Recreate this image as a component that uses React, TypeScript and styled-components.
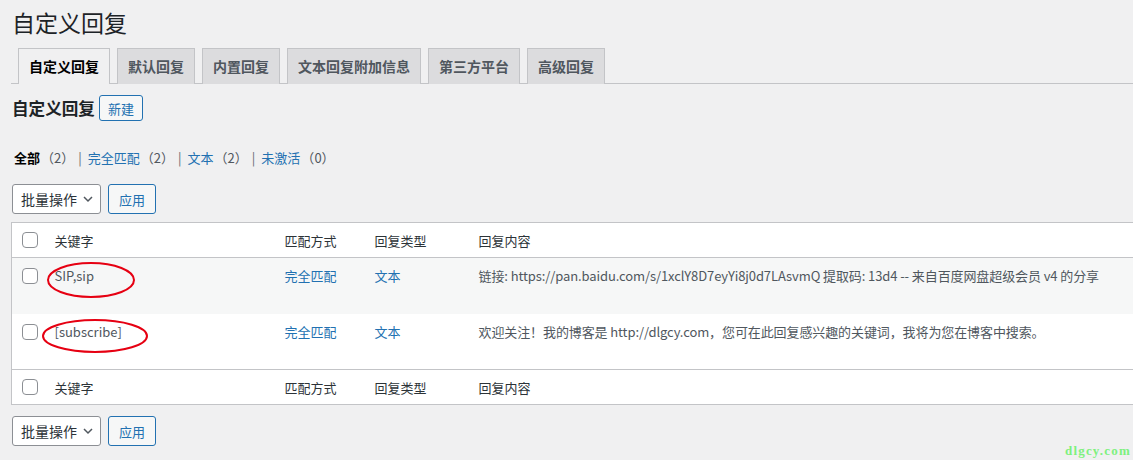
import { createGlobalStyle } from "styled-components";
import styled from "styled-components";

const GlobalStyle = createGlobalStyle`
	html, body {
		margin: 0;
		padding: 0;
		height: 460px;
		overflow: hidden;
		background: #f0f0f1;
	}
	body {
		font-family: "Noto Sans CJK SC", "Noto Sans", sans-serif;
		font-size: 13px;
		color: #3c434a;
	}
`;

const Wrap = styled.div`
	position: relative;
	height: 460px;
	padding: 7px 0 0 11px;
	box-sizing: border-box;
	overflow: hidden;
`;

const PageTitle = styled.h1`
	margin: 0 0 0 1px;
	font-size: 23px;
	font-weight: 400;
	line-height: 30px;
	color: #1d2327;
`;

const TabBar = styled.nav`
	display: flex;
	gap: 7px;
	margin-top: 11px;
	padding-left: 7px;
	border-bottom: 1px solid #c3c4c7;
	height: 35px;
`;

const Tab = styled.a<{ $active?: boolean }>`
	display: block;
	height: 36px;
	box-sizing: border-box;
	padding: 5px 10px;
	font-size: 14px;
	line-height: 24px;
	font-weight: 600;
	border: 1px solid #c3c4c7;
	border-bottom: none;
	background: ${({ $active }) => ($active ? "#f0f0f1" : "#dcdcde")};
	color: ${({ $active }) => ($active ? "#000" : "#50575e")};
	text-decoration: none;
	white-space: nowrap;
`;

const HeadingRow = styled.div`
	display: flex;
	align-items: center;
	gap: 4px;
	margin-top: 11px;
	height: 26px;
`;

const SectionTitle = styled.h2`
	margin: 0 0 0 1px;
	font-size: 16.6px;
	font-weight: 700;
	line-height: 26px;
	color: #1d2327;
`;

const OutlineButton = styled.button<{ $height?: number }>`
	height: ${({ $height = 26 }) => $height}px;
	box-sizing: border-box;
	padding: 0 ${({ $height = 26 }) => ($height > 26 ? 10 : 8)}px;
	border: 1px solid #2271b1;
	border-radius: 3px;
	background: #f6f7f7;
	color: #2271b1;
	font-family: inherit;
	font-size: 13px;
	line-height: 1;
	cursor: pointer;
`;

const Filters = styled.ul`
	display: flex;
	list-style: none;
	margin: 27px 0 0 3px;
	padding: 0;
	line-height: 20px;
	color: #646970;
	white-space: pre;
`;

const FilterLink = styled.a<{ $current?: boolean }>`
	color: ${({ $current }) => ($current ? "#000" : "#2271b1")};
	font-weight: ${({ $current }) => ($current ? 600 : 400)};
	text-decoration: none;
`;

const Count = styled.span`
	margin-left: 1px;
	color: #50575e;
	font-weight: 400;
`;

const Separator = styled.span`
	margin: 0 6px 0 4px;
	color: #646970;
`;

const Actions = styled.div<{ $top: number }>`
	display: flex;
	gap: 7px;
	margin-top: ${({ $top }) => $top}px;
	padding-left: 1px;
`;

const SelectBox = styled.div`
	display: flex;
	align-items: center;
	justify-content: space-between;
	height: 30px;
	width: 89px;
	box-sizing: border-box;
	padding: 0 6px 0 8px;
	background: #fff;
	border: 1px solid #8c8f94;
	border-radius: 3px;
	font-size: 14px;
	color: #2c3338;
`;

const Table = styled.table`
	margin-top: 8px;
	width: 1140px;
	table-layout: fixed;
	border-collapse: collapse;
	background: #fff;
	border: 1px solid #c3c4c7;
`;

const HeadRow = styled.tr<{ $top?: boolean }>`
	height: 35px;
	${({ $top }) =>
		$top ? "border-bottom: 1px solid #c3c4c7;" : "border-top: 1px solid #c3c4c7;"}
`;

const BodyRow = styled.tr<{ $striped?: boolean }>`
	height: 56px;
	background: ${({ $striped }) => ($striped ? "#f6f7f7" : "#fff")};
`;

const HeadCell = styled.th`
	padding: 0 10px;
	text-align: left;
	font-weight: 400;
	font-size: 13px;
	color: #2c3338;
	vertical-align: middle;
`;

const Cell = styled.td`
	position: relative;
	padding: 8px 10px 0;
	vertical-align: top;
	line-height: 20px;
	color: #50575e;
	white-space: nowrap;
`;

const ContentCell = styled(Cell)`
	letter-spacing: -0.1px;
`;

const CheckCell = styled.td<{ $head?: boolean }>`
	padding: ${({ $head }) => ($head ? "0 0 0 10px" : "10px 0 0 10px")};
	vertical-align: ${({ $head }) => ($head ? "middle" : "top")};
`;

const CheckBox = styled.span`
	display: block;
	width: 16px;
	height: 16px;
	box-sizing: border-box;
	border: 1px solid #8c8f94;
	border-radius: 4px;
	background: #fff;
`;

const Link = styled.a`
	color: #2271b1;
	text-decoration: none;
`;

const Ring = styled.svg<{ $left: number; $top: number }>`
	position: absolute;
	left: ${({ $left }) => $left}px;
	top: ${({ $top }) => $top}px;
	overflow: visible;
`;

const Watermark = styled.div`
	position: absolute;
	right: 2px;
	bottom: 1px;
	font-family: "Liberation Serif", serif;
	font-weight: 700;
	font-size: 13px;
	letter-spacing: 1.2px;
	color: #7ef07e;
`;

const Chevron = () => (
	<svg width="12" height="12" viewBox="0 0 12 12">
		<path d="M2 4l4 4 4-4" fill="none" stroke="#50575e" strokeWidth="1.5" />
	</svg>
);

const Ellipse = ({ left, top, w, h }: { left: number; top: number; w: number; h: number }) => (
	<Ring $left={left} $top={top} width={w} height={h} viewBox={`0 0 ${w} ${h}`}>
		<ellipse cx={w / 2} cy={h / 2} rx={w / 2 - 1} ry={h / 2 - 1} fill="none" stroke="#e60012" strokeWidth="2" />
	</Ring>
);

const BulkActions = ({ top }: { top: number }) => (
	<Actions $top={top}>
		<SelectBox>
			批量操作
			<Chevron />
		</SelectBox>
		<OutlineButton $height={30}>应用</OutlineButton>
	</Actions>
);

const tabs = ["自定义回复", "默认回复", "内置回复", "文本回复附加信息", "第三方平台", "高级回复"];

const filters = [
	{ label: "全部", count: 2, current: true },
	{ label: "完全匹配", count: 2 },
	{ label: "文本", count: 2 },
	{ label: "未激活", count: 0 },
];

const rows = [
	{
		keyword: "SIP,sip",
		content:
			"链接: https://pan.baidu.com/s/1xclY8D7eyYi8j0d7LAsvmQ 提取码: 13d4 -- 来自百度网盘超级会员 v4 的分享",
		ring: { left: 2, top: 4, w: 88, h: 36 },
	},
	{
		keyword: "[subscribe]",
		content: "欢迎关注！我的博客是 http://dlgcy.com，您可在此回复感兴趣的关键词，我将为您在博客中搜索。",
		ring: { left: -3, top: 5, w: 106, h: 34 },
	},
];

const HeaderCells = () => (
	<>
		<CheckCell $head>
			<CheckBox />
		</CheckCell>
		<HeadCell>关键字</HeadCell>
		<HeadCell>匹配方式</HeadCell>
		<HeadCell>回复类型</HeadCell>
		<HeadCell>回复内容</HeadCell>
	</>
);

export default function App() {
	return (
		<Wrap>
			<GlobalStyle />
			<PageTitle>自定义回复</PageTitle>
			<TabBar>
				{tabs.map((t, i) => (
					<Tab key={t} $active={i === 0}>
						{t}
					</Tab>
				))}
			</TabBar>
			<HeadingRow>
				<SectionTitle>自定义回复</SectionTitle>
				<OutlineButton>新建</OutlineButton>
			</HeadingRow>
			<Filters>
				{filters.map((f, i) => (
					<li key={f.label}>
						<FilterLink $current={f.current}>
							{f.label}
							<Count>（{f.count}）</Count>
						</FilterLink>
						{i < filters.length - 1 && <Separator>|</Separator>}
					</li>
				))}
			</Filters>
			<BulkActions top={16} />
			<Table>
				<colgroup>
					<col style={{ width: 33 }} />
					<col style={{ width: 230 }} />
					<col style={{ width: 90 }} />
					<col style={{ width: 104 }} />
					<col />
				</colgroup>
				<thead>
					<HeadRow $top>
						<HeaderCells />
					</HeadRow>
				</thead>
				<tbody>
					{rows.map((r, i) => (
						<BodyRow key={r.keyword} $striped={i === 0}>
							<CheckCell>
								<CheckBox />
							</CheckCell>
							<Cell>
								{r.keyword}
								<Ellipse {...r.ring} />
							</Cell>
							<Cell>
								<Link>完全匹配</Link>
							</Cell>
							<Cell>
								<Link>文本</Link>
							</Cell>
							<ContentCell>{r.content}</ContentCell>
						</BodyRow>
					))}
				</tbody>
				<tfoot>
					<HeadRow>
						<HeaderCells />
					</HeadRow>
				</tfoot>
			</Table>
			<BulkActions top={11} />
			<Watermark>dlgcy.com</Watermark>
		</Wrap>
	);
}
